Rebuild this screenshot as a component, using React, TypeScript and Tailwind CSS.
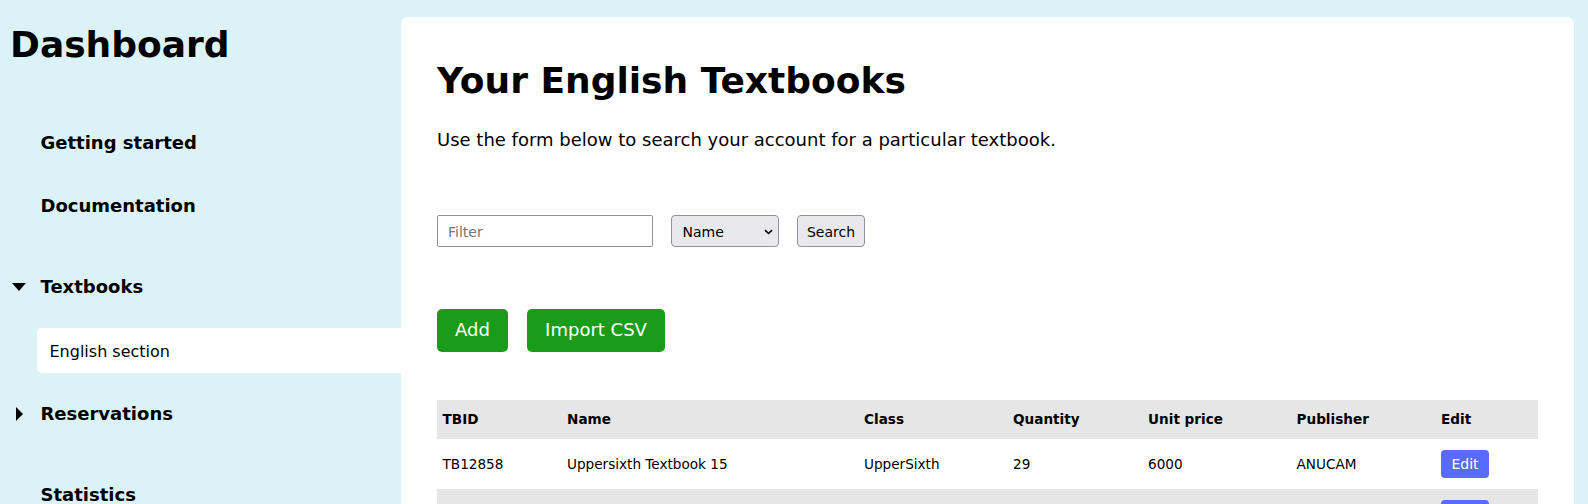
export default function App() {
  const font = { fontFamily: '"DejaVu Sans", sans-serif' };
  const navBold = "text-[18px] font-bold leading-[22px] text-black";
  const th = "px-[5px] text-left text-[13.6px] font-bold first:pl-[5.5px]";
  const td = "px-[5px] text-[13.6px] first:pl-[5.5px]";
  return (
    <div style={font} className="flex h-[504px] w-[1588px] overflow-hidden bg-[#dbf3f6] text-black">
      <aside className="w-[401px] shrink-0">
        <h1 className="mt-[24px] ml-[10px] text-[36px] font-bold leading-[42px]">Dashboard</h1>
        <nav className="mt-[66px] flex flex-col">
          <a className={`ml-[40.5px] ${navBold}`}>Getting started</a>
          <a className={`ml-[40.5px] mt-[41px] ${navBold}`}>Documentation</a>
          <div className={`mt-[59px] flex items-center ${navBold}`}>
            <svg width="14" height="8" viewBox="0 0 14 8" className="ml-[12px] mr-[14.5px]">
              <polygon points="0,0 14,0 7,8" fill="#000" />
            </svg>
            Textbooks
          </div>
          <a className="ml-[37px] mt-[30px] flex h-[45px] items-center rounded-l-[5px] bg-white pl-[12.5px] pt-[2px] text-[16px]">English section</a>
          <div className={`mt-[30px] flex items-center ${navBold}`}>
            <svg width="7" height="14" viewBox="0 0 7 14" className="ml-[16px] mr-[17.5px]">
              <polygon points="0,0 7,7 0,14" fill="#000" />
            </svg>
            Reservations
          </div>
          <a className={`ml-[40.5px] mt-[59px] ${navBold}`}>Statistics</a>
        </nav>
      </aside>
      <main className="mt-[17px] mr-[14px] flex-1 rounded-t-[7px] bg-white px-[36px]">
        <h2 className="mt-[43px] text-[36px] font-bold leading-[42px]">Your English Textbooks</h2>
        <p className="mt-[27px] text-[18px] leading-[22px]">Use the form below to search your account for a particular textbook.</p>
        <div className="mt-[64px] flex items-center gap-[18px] text-[14px]">
          <input
            placeholder="Filter"
            className="h-[32px] w-[216px] rounded-[2px] border border-[#8f8f9d] bg-white px-[10px] pt-[2px] text-[14px] placeholder:text-[#757575]"
          />
          <div className="relative h-[32px] w-[108px]">
            <select className="h-full w-full appearance-none rounded-[4px] border border-[#8f8f9d] bg-[#e9e9ed] pl-[10.5px] pt-[2px] text-[14px]">
              <option>Name</option>
            </select>
            <svg width="9" height="6" viewBox="0 0 9 6" className="pointer-events-none absolute right-[6px] top-[13.5px]">
              <path d="M1 1.2l3.5 3.3 3.5-3.3" fill="none" stroke="#000" strokeWidth="1.6" />
            </svg>
          </div>
          <button className="h-[32px] w-[68px] rounded-[4px] border border-[#8f8f9d] bg-[#e9e9ed] pt-[2px] text-[14px]">Search</button>
        </div>
        <div className="mt-[62px] flex gap-[19px] text-[18px] text-white">
          <button className="h-[43px] w-[71px] rounded-[5px] bg-[#1a9c1a] pb-[2px]">Add</button>
          <button className="h-[43px] w-[138px] rounded-[5px] bg-[#1a9c1a] pb-[2px]">Import CSV</button>
        </div>
        <table className="mt-[48px] w-[1101px] table-fixed border-collapse">
          <colgroup>
            <col className="w-[125px]" />
            <col className="w-[297px]" />
            <col className="w-[149px]" />
            <col className="w-[135px]" />
            <col className="w-[148.5px]" />
            <col className="w-[144.5px]" />
            <col className="w-[102px]" />
          </colgroup>
          <thead>
            <tr className="h-[39px] bg-[#e6e6e6]">
              {["TBID", "Name", "Class", "Quantity", "Unit price", "Publisher", "Edit"].map((h) => (
                <th key={h} className={th}>{h}</th>
              ))}
            </tr>
          </thead>
          <tbody>
            <tr className="h-[50px]">
              <td className={td}>TB12858</td>
              <td className={td}>Uppersixth Textbook 15</td>
              <td className={td}>UpperSixth</td>
              <td className={td}>29</td>
              <td className={td}>6000</td>
              <td className={td}>ANUCAM</td>
              <td className={td}>
                <button className="h-[28px] w-[48px] rounded-[4px] bg-[#586bff] text-[14px] text-white">Edit</button>
              </td>
            </tr>
            <tr className="h-[50px] bg-[#e6e6e6]">
              <td className={td} colSpan={6}></td>
              <td className={td}>
                <button className="h-[28px] w-[48px] rounded-[4px] bg-[#586bff] text-[14px] text-white">Edit</button>
              </td>
            </tr>
          </tbody>
        </table>
      </main>
    </div>
  );
}
